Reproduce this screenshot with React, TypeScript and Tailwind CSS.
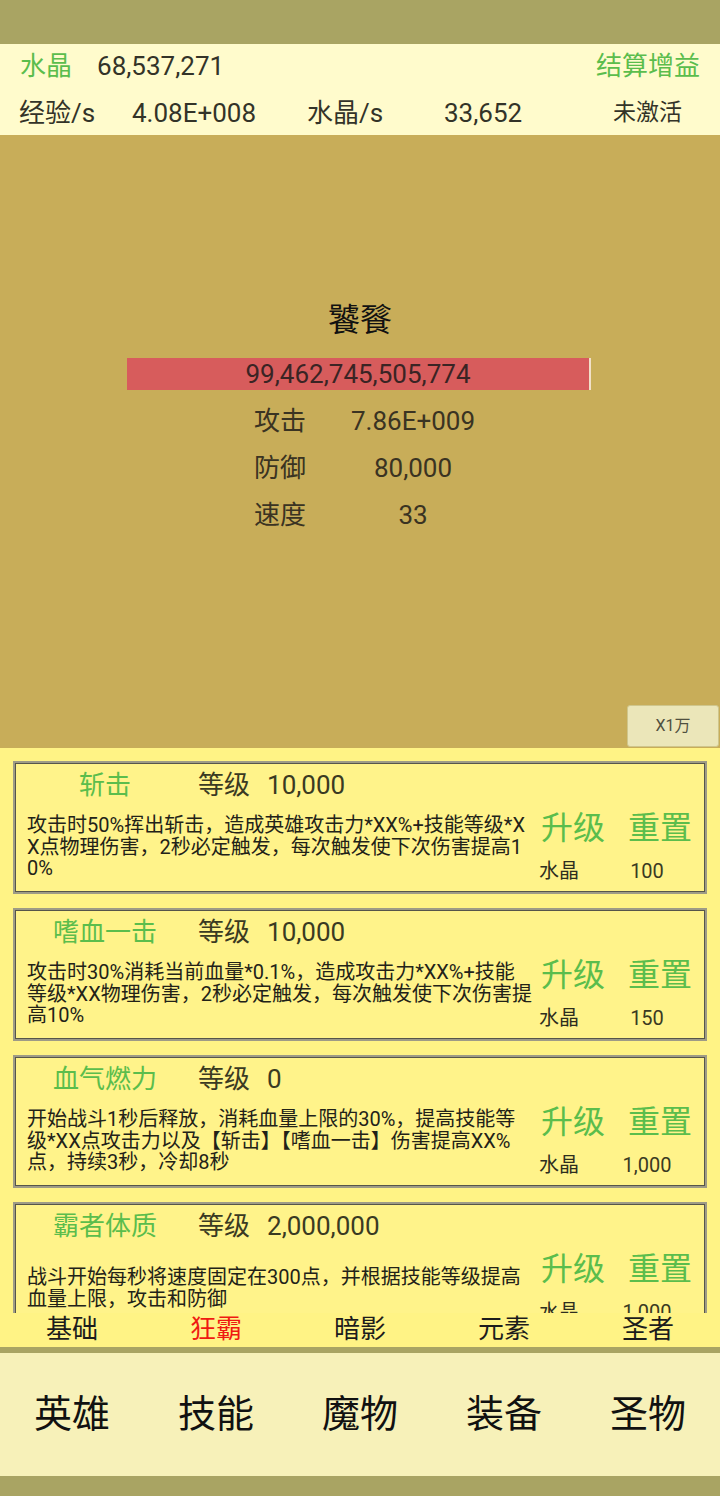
import React from "react";

const FONT = { fontFamily: "Roboto, 'Noto Sans CJK SC', sans-serif" };

type Skill = {
  name: string;
  level: string;
  lines: string[];
  cost: string;
};

const skills: Skill[] = [
  {
    name: "斩击",
    level: "10,000",
    lines: [
      "攻击时50%挥出斩击，造成英雄攻击力*XX%+技能等级*X",
      "X点物理伤害，2秒必定触发，每次触发使下次伤害提高1",
      "0%",
    ],
    cost: "100",
  },
  {
    name: "嗜血一击",
    level: "10,000",
    lines: [
      "攻击时30%消耗当前血量*0.1%，造成攻击力*XX%+技能",
      "等级*XX物理伤害，2秒必定触发，每次触发使下次伤害提",
      "高10%",
    ],
    cost: "150",
  },
  {
    name: "血气燃力",
    level: "0",
    lines: [
      "开始战斗1秒后释放，消耗血量上限的30%，提高技能等",
      "级*XX点攻击力以及【斩击】【嗜血一击】伤害提高XX%",
      "点，持续3秒，冷却8秒",
    ],
    cost: "1,000",
  },
  {
    name: "霸者体质",
    level: "2,000,000",
    lines: [
      "战斗开始每秒将速度固定在300点，并根据技能等级提高",
      "血量上限，攻击和防御",
    ],
    cost: "1,000",
  },
];

function SkillCard({ s }: { s: Skill }) {
  return (
    <div className="h-[133px] shrink-0 border-2 border-[#9e9b86] bg-[#fff38a] shadow-[inset_0_0_0_1px_#56554a] flex flex-col">
      <div className="h-[44px] flex items-center text-[26px]">
        <div className="w-[156px] ml-[12px] text-center text-[#5bbd4c]">{s.name}</div>
        <div className="ml-[15px] text-[#3a3a22]">等级</div>
        <div className="ml-[17px] text-[#3a3a22]">{s.level}</div>
      </div>
      <div className="flex flex-1">
        <div className="w-[512px] ml-[12px] flex flex-col justify-center pb-[4px] text-[20px] leading-[21.5px] text-[#222218]">
          {s.lines.map((l, i) => (
            <div key={i} className="whitespace-nowrap">
              {l}
            </div>
          ))}
        </div>
        <div className="flex flex-col">
          <div className="flex gap-[23px] pl-[2px] pt-[2px] text-[32px] leading-[38px] text-[#5bbd4c]">
            <span>升级</span>
            <span>重置</span>
          </div>
          <div className="flex mt-[12px] text-[20px] leading-[24px] text-[#2e2e1e]">
            <span className="w-[40px]">水晶</span>
            <span className="ml-[22px] w-[92px] text-center text-[#3a3a22]">{s.cost}</span>
          </div>
        </div>
      </div>
    </div>
  );
}

export default function App() {
  const stats = [
    ["攻击", "7.86E+009"],
    ["防御", "80,000"],
    ["速度", "33"],
  ];
  const tabs = ["基础", "狂霸", "暗影", "元素", "圣者"];
  const nav = ["英雄", "技能", "魔物", "装备", "圣物"];
  return (
    <div className="w-[720px] h-[1496px] flex flex-col overflow-hidden" style={FONT}>
      <div className="h-[44px] bg-[#a9a463]" />
      <div className="h-[91px] bg-[#fffbcc] flex flex-col text-[26px] text-[#333328]">
        <div className="h-[44px] flex items-center pt-[1px]">
          <span className="ml-[20px] text-[#5bbd4c]">水晶</span>
          <span className="ml-[25px]">68,537,271</span>
          <span className="ml-auto mr-[20px] text-[#5bbd4c]">结算增益</span>
        </div>
        <div className="h-[47px] flex items-center pt-[3px]">
          <span className="ml-[19px] w-[113px]">经验/s</span>
          <span className="w-[175px]">4.08E+008</span>
          <span className="w-[137px]">水晶/s</span>
          <span className="w-[169px]">33,652</span>
          <span className="text-[23px]">未激活</span>
        </div>
      </div>
      <div className="h-[613px] bg-[#c8ad59] flex flex-col">
        <div className="pt-[165px] h-[205px] text-center text-[32px] leading-[40px] text-[#111]">饕餮</div>
        <div className="mt-[18px] ml-[127px] w-[464px] h-[32px] bg-[#d75c5c] border-r-2 border-[#f1e0c8] flex items-center justify-center text-[26px] text-[#3a2424]">
          99,462,745,505,774
        </div>
        <div className="mt-[8px] flex flex-col">
          {stats.map(([k, v]) => (
            <div key={k} className="h-[47px] flex items-center text-[26px] text-[#3a3322]">
              <span className="ml-[254px] w-[52px]">{k}</span>
              <span className="w-[214px] text-center">{v}</span>
            </div>
          ))}
        </div>
        <div className="mt-auto mb-[1px] self-end mr-[1px] w-[92px] h-[42px] rounded-[3px] border border-[#cfc68c] bg-[#ebe6b9] flex items-center justify-center text-[16px] text-[#505040]">
          X1万
        </div>
      </div>
      <div className="h-[565px] bg-[#fff385] overflow-hidden px-[13px] pt-[13px] flex flex-col gap-[14px]">
        {skills.map((s) => (
          <SkillCard key={s.name} s={s} />
        ))}
      </div>
      <div className="h-[34px] bg-[#fff385] grid grid-cols-5 text-[26px] leading-[32px] text-[#1c1c1c]">
        {tabs.map((t) => (
          <div key={t} className={"text-center " + (t === "狂霸" ? "text-[#ef1a12]" : "")}>
            {t}
          </div>
        ))}
      </div>
      <div className="h-[6px] bg-[#a9a463]" />
      <div className="h-[123px] bg-[#f7f1b9] grid grid-cols-5 items-center text-[38px] text-[#111]">
        {nav.map((t) => (
          <div key={t} className="text-center">
            {t}
          </div>
        ))}
      </div>
      <div className="h-[20px] bg-[#a9a463]" />
    </div>
  );
}
